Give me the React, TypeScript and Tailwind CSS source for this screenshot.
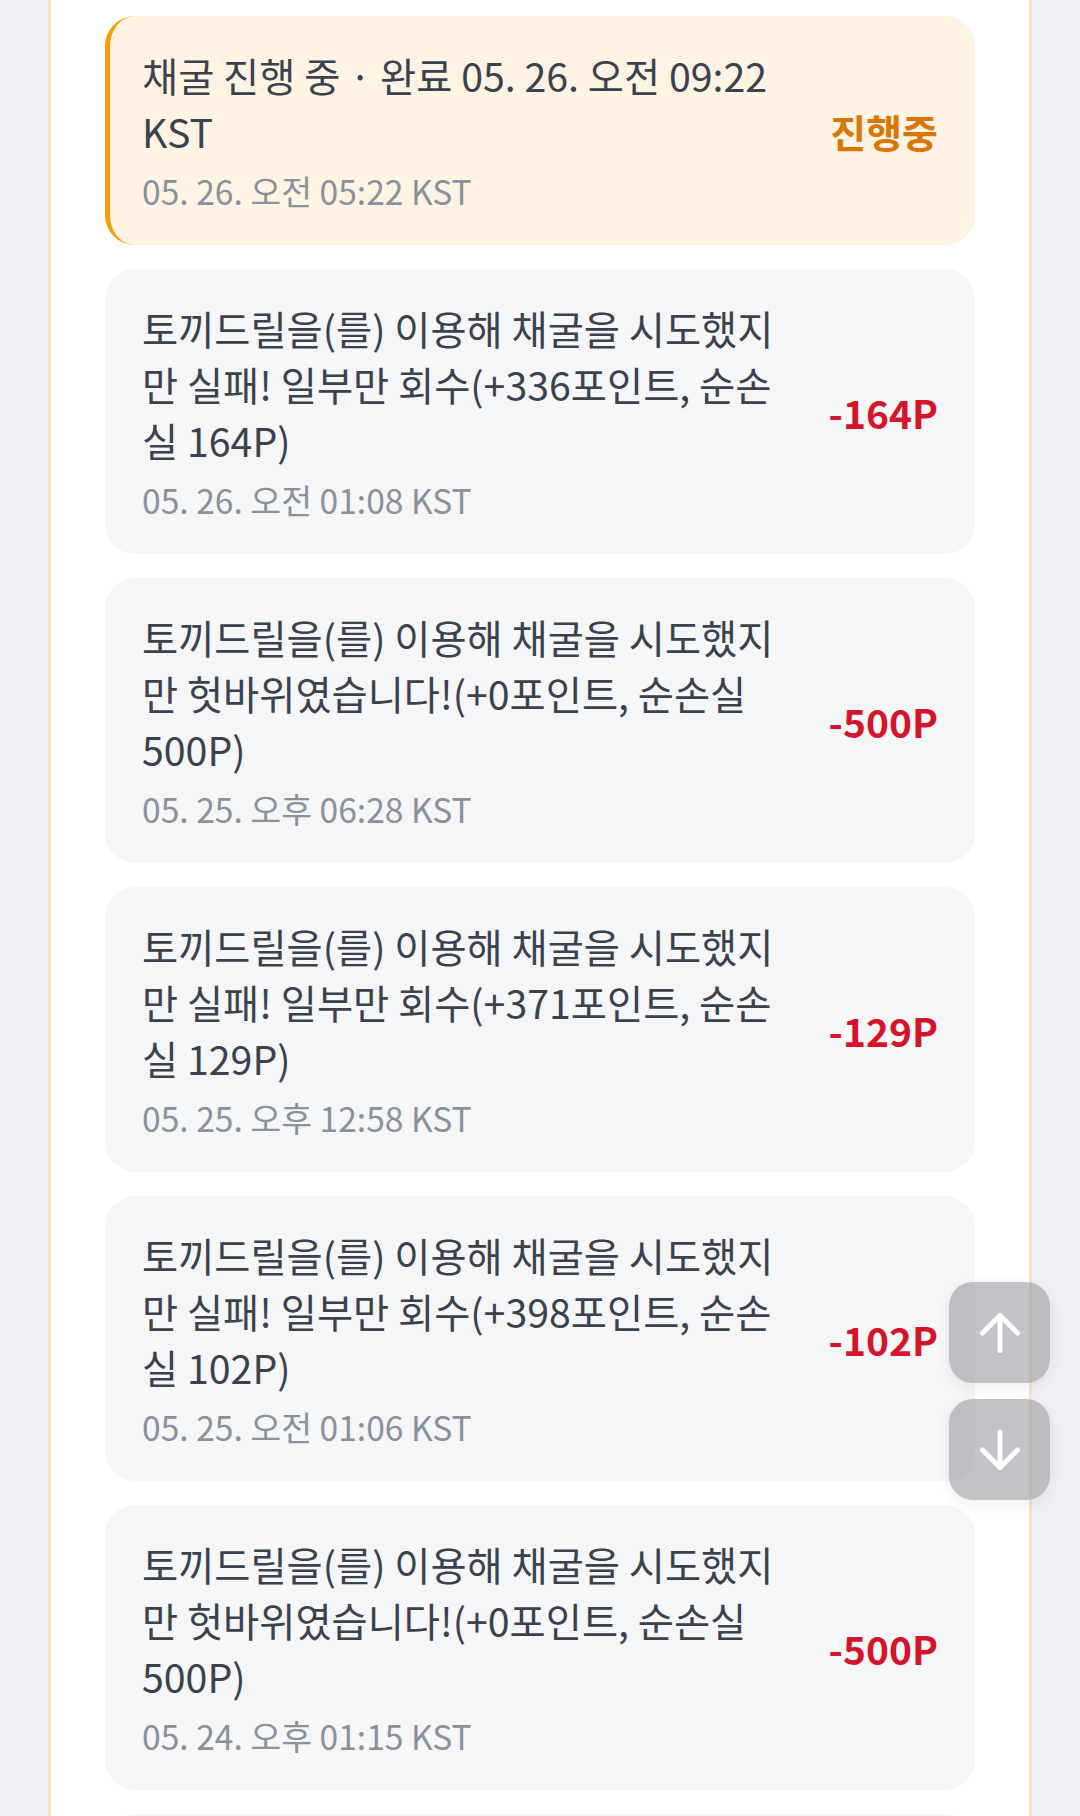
import React from "react";
import { ArrowUp, ArrowDown } from "lucide-react";

type Item = { text: string; date: string; amount: string; active?: boolean };

const items: Item[] = [
  { text: "채굴 진행 중 · 완료 05. 26. 오전 09:22 KST", date: "05. 26. 오전 05:22 KST", amount: "진행중", active: true },
  { text: "토끼드릴을(를) 이용해 채굴을 시도했지만 실패! 일부만 회수(+336포인트, 순손실 164P)", date: "05. 26. 오전 01:08 KST", amount: "-164P" },
  { text: "토끼드릴을(를) 이용해 채굴을 시도했지만 헛바위였습니다!(+0포인트, 순손실 500P)", date: "05. 25. 오후 06:28 KST", amount: "-500P" },
  { text: "토끼드릴을(를) 이용해 채굴을 시도했지만 실패! 일부만 회수(+371포인트, 순손실 129P)", date: "05. 25. 오후 12:58 KST", amount: "-129P" },
  { text: "토끼드릴을(를) 이용해 채굴을 시도했지만 실패! 일부만 회수(+398포인트, 순손실 102P)", date: "05. 25. 오전 01:06 KST", amount: "-102P" },
  { text: "토끼드릴을(를) 이용해 채굴을 시도했지만 헛바위였습니다!(+0포인트, 순손실 500P)", date: "05. 24. 오후 01:15 KST", amount: "-500P" },
];

function Card({ item }: { item: Item }) {
  return (
    <div
      className={
        item.active
          ? "flex items-center gap-[38px] rounded-[30px] border-l-[5px] border-[#f59e0b] bg-[#fff4e4] py-[31px] pl-[32px] pr-[37px]"
          : "flex items-center gap-[38px] rounded-[30px] bg-[#f5f6f8] py-[31px] pl-[37px] pr-[37px]"
      }
    >
      <div className="min-w-0 flex-1">
        <div className="text-[39.3px] leading-[56px] text-[#3c424d]">{item.text}</div>
        <div className="mt-[8px] text-[33.6px] leading-[47px] text-[#8a919c]">{item.date}</div>
      </div>
      <div
        className={
          item.active
            ? "shrink-0 text-[39px] font-bold leading-[50px] text-[#d97706]"
            : "shrink-0 text-[39px] font-bold leading-[50px] text-[#d4142a]"
        }
      >
        {item.amount}
      </div>
    </div>
  );
}

export default function App() {
  return (
    <div className="relative h-[1816px] overflow-hidden bg-[#eef0f3] px-[48px] font-['Noto_Sans_CJK_KR','Noto_Sans',sans-serif]">
      <div className="h-full border-x-[3px] border-[#f7e4c6] bg-white px-[54px] pt-[16px]">
        <div className="flex flex-col gap-[24px]">
          {items.map((it, i) => (
            <Card key={i} item={it} />
          ))}
          <div className="h-[285px] rounded-[30px] bg-[#f5f6f8]" />
        </div>
      </div>
      <div className="absolute right-[30px] top-[1282px] flex flex-col gap-[16px]">
        <button className="flex h-[101px] w-[101px] items-center justify-center rounded-[24px] bg-[rgba(150,152,156,0.58)] shadow-[0_4px_14px_rgba(0,0,0,0.08)]">
          <ArrowUp size={60} strokeWidth={2} color="#ffffff" />
        </button>
        <button className="flex h-[101px] w-[101px] items-center justify-center rounded-[24px] bg-[rgba(150,152,156,0.58)] shadow-[0_4px_14px_rgba(0,0,0,0.08)]">
          <ArrowDown size={60} strokeWidth={2} color="#ffffff" />
        </button>
      </div>
    </div>
  );
}
